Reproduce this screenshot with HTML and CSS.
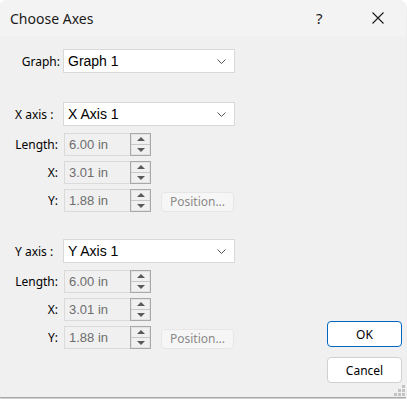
FILE: index.html
```html
<!DOCTYPE html>
<html lang="en">
<head>
  <meta charset="UTF-8" />
  <title>Choose Axes</title>
  <link rel="stylesheet" href="styles.css">
</head>
<body>

  <div class="dialog">
    <div class="titlebar">
      <span class="title">Choose Axes</span>
      <span class="help">?</span>
      <span class="close">
        <svg width="12" height="12" viewBox="0 0 12 12"><path d="M0.5 0.5 L11.5 11.5 M11.5 0.5 L0.5 11.5" stroke="#1a1a1a" stroke-width="1.1" fill="none"/></svg>
      </span>
    </div>

    <div class="content">
      <div class="form">
        <div class="row graph-row">
          <label class="lbl lbl-right">Graph:</label>
          <div class="select">
            <span>Graph 1</span>
            <svg class="chev" width="9" height="5" viewBox="0 0 9 5"><path d="M0.5 0.5 L4.5 4.5 L8.5 0.5" stroke="#555" fill="none"/></svg>
          </div>
        </div>

        <div class="axis-group first">
          <div class="row">
            <label class="lbl">X axis :</label>
            <div class="select">
              <span>X Axis 1</span>
              <svg class="chev" width="9" height="5" viewBox="0 0 9 5"><path d="M0.5 0.5 L4.5 4.5 L8.5 0.5" stroke="#555" fill="none"/></svg>
            </div>
          </div>
          <div class="fields">
            <div class="row field">
              <label class="lbl lbl-field">Length:</label>
              <div class="spin"><input value="6.00 in" disabled><div class="arrows"><i class="up"></i><i class="down"></i></div></div>
            </div>
            <div class="row field">
              <label class="lbl lbl-field">X:</label>
              <div class="spin"><input value="3.01 in" disabled><div class="arrows"><i class="up"></i><i class="down"></i></div></div>
            </div>
            <div class="row field">
              <label class="lbl lbl-field">Y:</label>
              <div class="spin"><input value="1.88 in" disabled><div class="arrows"><i class="up"></i><i class="down"></i></div></div>
              <button class="position" disabled>Position...</button>
            </div>
          </div>
        </div>

        <div class="axis-group second">
          <div class="row">
            <label class="lbl">Y axis :</label>
            <div class="select">
              <span>Y Axis 1</span>
              <svg class="chev" width="9" height="5" viewBox="0 0 9 5"><path d="M0.5 0.5 L4.5 4.5 L8.5 0.5" stroke="#555" fill="none"/></svg>
            </div>
          </div>
          <div class="fields">
            <div class="row field">
              <label class="lbl lbl-field">Length:</label>
              <div class="spin"><input value="6.00 in" disabled><div class="arrows"><i class="up"></i><i class="down"></i></div></div>
            </div>
            <div class="row field">
              <label class="lbl lbl-field">X:</label>
              <div class="spin"><input value="3.01 in" disabled><div class="arrows"><i class="up"></i><i class="down"></i></div></div>
            </div>
            <div class="row field">
              <label class="lbl lbl-field">Y:</label>
              <div class="spin"><input value="1.88 in" disabled><div class="arrows"><i class="up"></i><i class="down"></i></div></div>
              <button class="position" disabled>Position...</button>
            </div>
          </div>
        </div>
      </div>

      <div class="actions">
        <button class="btn btn-default">OK</button>
        <button class="btn">Cancel</button>
      </div>

      <div class="grip">
        <svg width="11" height="11" viewBox="0 0 11 11" fill="#c4c4c4">
          <rect x="8" y="0" width="3" height="3"/>
          <rect x="4" y="4" width="3" height="3"/><rect x="8" y="4" width="3" height="3"/>
          <rect x="0" y="8" width="3" height="3"/><rect x="4" y="8" width="3" height="3"/><rect x="8" y="8" width="3" height="3"/>
        </svg>
      </div>
    </div>
  </div>

</body>
</html>
```

FILE: styles.css
```css
:root {
  --bg: #f0f0f0;
  --title-bg: #f3f3f3;
  --text: #000000;
  --muted: #6d6d6d;
  --accent: #0067c0;
}

html, body {
  margin: 0;
  padding: 0;
  background: #ffffff;
}

body {
  width: 407px;
  height: 399px;
  overflow: hidden;
  font-family: "Noto Sans", sans-serif;
  color: var(--text);
}

.dialog {
  width: 406px;
  height: 397px;
  background-color: var(--bg);
  border-radius: 8px 8px 0 0;
  border-bottom: 1px solid #a9a9a9;
  box-shadow: 0 1px 2px rgba(0, 0, 0, 0.25);
  display: flex;
  flex-direction: column;
  overflow: hidden;
}

.titlebar {
  height: 36px;
  flex: none;
  display: flex;
  align-items: center;
  background-color: var(--title-bg);
  padding-left: 10px;
  font-size: 14px;
}

.title {
  flex: 1;
  color: #1a1a1a;
}

.help {
  width: 12px;
  margin-right: 44px;
  font-size: 15px;
  color: #1a1a1a;
}

.close {
  width: 12px;
  height: 12px;
  margin-right: 22px;
  display: flex;
}

.content {
  flex: 1;
  position: relative;
  display: flex;
  justify-content: space-between;
}

.form {
  padding-left: 15px;
  padding-top: 13px;
  display: flex;
  flex-direction: column;
}

.row {
  display: flex;
  align-items: center;
}

.lbl {
  width: 48px;
  flex: none;
  font-size: 12px;
  white-space: nowrap;
}

.lbl-right {
  text-align: right;
  padding-right: 3px;
  width: 45px;
}

.lbl-field {
  text-align: right;
  padding-right: 6px;
  width: 43px;
}

.select {
  width: 172px;
  height: 24px;
  box-sizing: border-box;
  background: #ffffff;
  border: 1px solid #d9d9d9;
  display: flex;
  align-items: center;
  justify-content: space-between;
  padding: 0 6px 0 4px;
  font-family: "Liberation Sans", Arial, sans-serif;
  font-size: 14px;
}

.chev {
  margin-right: 2px;
}

.axis-group.first {
  margin-top: 29px;
}

.axis-group.second {
  margin-top: 27px;
}

.fields {
  margin-top: 7px;
  display: flex;
  flex-direction: column;
  gap: 5px;
}

.field {
  height: 23px;
}

.spin {
  display: flex;
  height: 23px;
}

.spin input {
  width: 66px;
  height: 23px;
  box-sizing: border-box;
  margin: 0;
  border: 1px solid #dadada;
  border-right: none;
  background: var(--bg);
  color: var(--muted);
  font-family: "Liberation Sans", Arial, sans-serif;
  font-size: 13px;
  padding: 0 0 0 4px;
}

.arrows {
  width: 21px;
  height: 23px;
  box-sizing: border-box;
  border: 1px solid #a9a9a9;
  box-shadow: inset 0 0 0 1px #e3e3e3;
  display: flex;
  flex-direction: column;
}

.arrows i {
  flex: 1;
  display: flex;
  align-items: center;
  justify-content: center;
}

.arrows .up {
  border-bottom: 1px solid #c8c8c8;
}

.arrows .up::after,
.arrows .down::after {
  content: "";
  border-left: 4px solid transparent;
  border-right: 4px solid transparent;
}

.arrows .up::after {
  border-bottom: 4px solid #5a5a5a;
}

.arrows .down::after {
  border-top: 4px solid #5a5a5a;
}

.position {
  margin-left: 10px;
  width: 73px;
  height: 20px;
  margin-top: 2px;
  box-sizing: border-box;
  background: #f6f6f6;
  border: 1px solid #e6e6e6;
  border-radius: 4px;
  font-family: "Noto Sans", sans-serif;
  font-size: 12px;
  color: #8a8a8a;
  padding: 0;
}

.actions {
  align-self: flex-end;
  display: flex;
  flex-direction: column;
  gap: 10px;
  padding-right: 4px;
  padding-bottom: 14px;
}

.btn {
  width: 75px;
  height: 26px;
  box-sizing: border-box;
  background: #ffffff;
  border: 1px solid #d0d0d0;
  border-radius: 4px;
  font-family: "Noto Sans", sans-serif;
  font-size: 12px;
  color: #000;
  padding: 0;
}

.btn-default {
  border-color: var(--accent);
}

.grip {
  position: absolute;
  right: 1px;
  bottom: 1px;
  display: flex;
}
```
